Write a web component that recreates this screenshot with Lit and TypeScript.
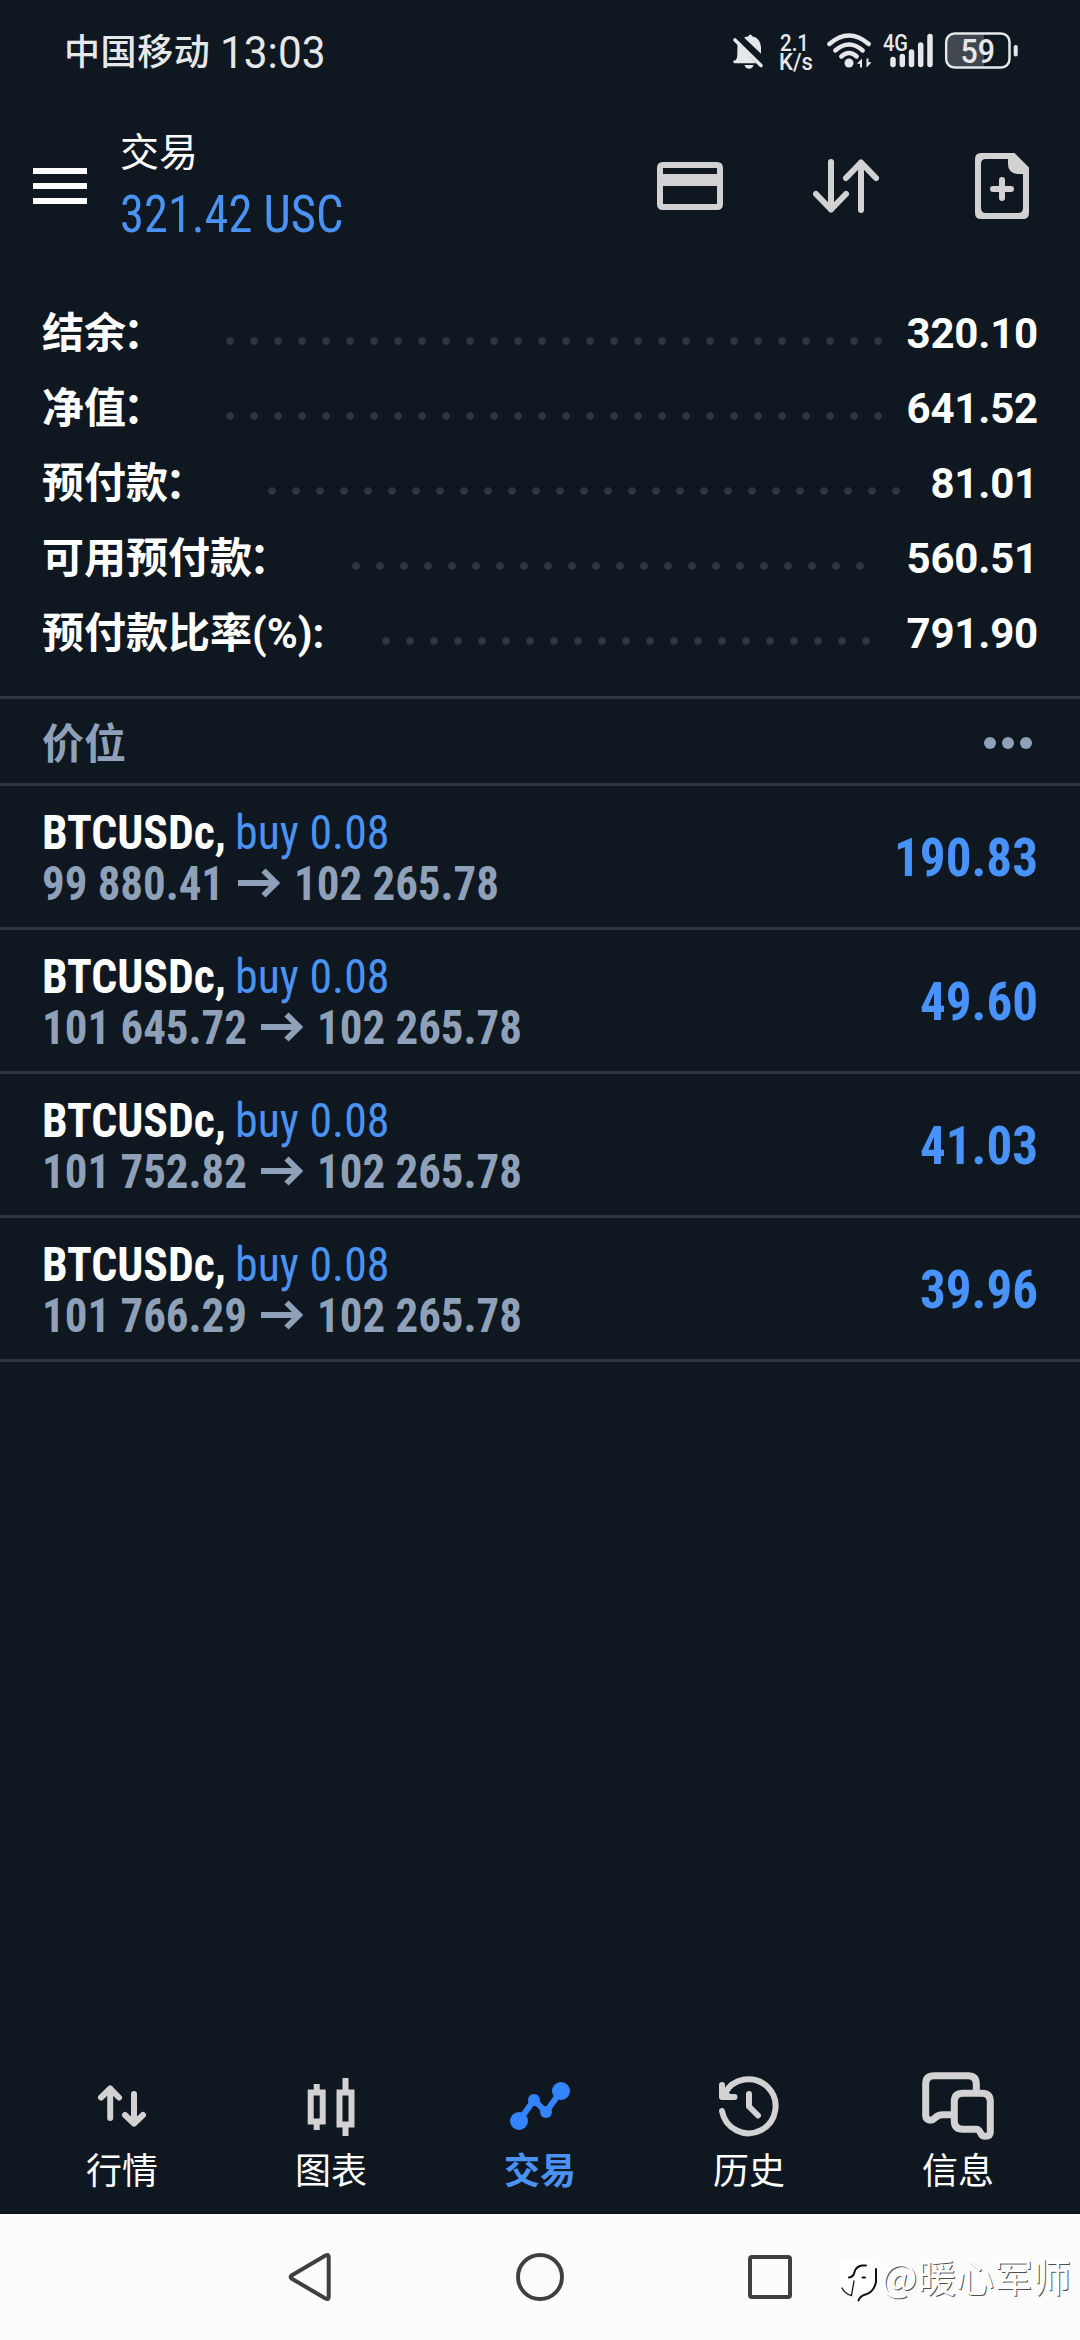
import { LitElement, html, css, svg } from "lit";
import { customElement, property } from "lit/decorators.js";

interface SummaryLine {
  label: string;
  colon: string;
  value: string;
  dots: number;
}

interface Position {
  open: string;
  openWidth: number;
  current: string;
  profit: string;
  profitWidth: number;
}

const SUMMARY: SummaryLine[] = [
  { label: "结余", colon: "：", value: "320.10", dots: 28 },
  { label: "净值", colon: "：", value: "641.52", dots: 28 },
  { label: "预付款", colon: "：", value: "81.01", dots: 27 },
  { label: "可用预付款", colon: "：", value: "560.51", dots: 22 },
  { label: "预付款比率(%):", colon: "", value: "791.90", dots: 21 },
];

const POSITIONS: Position[] = [
  { open: "99 880.41", openWidth: 182, current: "102 265.78", profit: "190.83", profitWidth: 144 },
  { open: "101 645.72", openWidth: 205, current: "102 265.78", profit: "49.60", profitWidth: 118 },
  { open: "101 752.82", openWidth: 205, current: "102 265.78", profit: "41.03", profitWidth: 118 },
  { open: "101 766.29", openWidth: 205, current: "102 265.78", profit: "39.96", profitWidth: 118 },
];

/** Single line of condensed text, squeezed to an exact advance width. */
@customElement("condensed-text")
class CondensedText extends LitElement {
  @property() text = "";
  @property({ type: Number }) width = 0;
  @property({ type: Number }) height = 51;
  @property({ type: Number }) baseline = 40;

  static styles = css`
    :host {
      display: block;
      flex: none;
      font-family: "Roboto Condensed", Roboto, sans-serif;
      font-stretch: 75%;
    }
    svg {
      display: block;
      overflow: visible;
    }
    text {
      fill: currentColor;
    }
  `;

  render() {
    return html`<svg width=${this.width} height=${this.height}>
      ${svg`<text x="0" y=${this.baseline} textLength=${this.width} lengthAdjust="spacingAndGlyphs">${this.text}</text>`}
    </svg>`;
  }
}

@customElement("status-bar")
class StatusBar extends LitElement {
  static styles = css`
    :host {
      display: flex;
      align-items: center;
      height: 105px;
      padding-left: 64px;
      padding-right: 62px;
      color: #e6e7e8;
    }
    .carrier {
      font-size: 36px;
      line-height: 60px;
      font-weight: 500;
      letter-spacing: 0.600px;
    }
    .time {
      margin-left: 9.500px;
      font-family: Roboto, sans-serif;
      font-stretch: 100%;
      font-size: 45px;
      font-weight: 450;
      flex: 1;
    }
    svg {
      display: block;
      flex: none;
      overflow: visible;
      position: relative;
      top: -1.5px;
    }
    .speed { margin-left: 17px; }
    .wifi { margin-left: 15px; }
    .signal { margin-left: 12px; }
    .battery { margin-left: 12px; }
    text {
      fill: #e6e7e8;
      font-size: 23px;
      font-weight: 500;
    }
    .level {
      font-size: 33px;
    }
  `;

  render() {
    return html`
      <div class="carrier">中国移动</div>
      <condensed-text class="time" .text=${"13:03"} .width=${105.5} .height=${60} .baseline=${44.5}></condensed-text>
      <svg class="bell" width="30" height="40" viewBox="733 31 30 40">
        <path fill="#e6e7e8" d="M744 37.5q2.500-1 4.500-1.300q.4-1.600 1.800-1.600t1.800 1.600q8.300 1.800 8.900 11v6.500z" />
        <path fill="#e6e7e8" d="M737.500 43L756 63.300H735q-1.800 0-1.800-1.500t1.800-1.500h.6q1.700-2 1.700-5z" />
        <path fill="#e6e7e8" d="M744.500 65h9q-.8 3.700-4.500 3.700t-4.500-3.700z" />
        <path stroke="#e6e7e8" stroke-width="3.600" stroke-linecap="round" d="M735 40L761 65.500" />
      </svg>
      <svg class="speed" width="32" height="40" viewBox="780 31 32 40">
        <text x="780" y="50.500" textLength="29" lengthAdjust="spacingAndGlyphs">2.1</text>
        <text x="779" y="69.500" textLength="34" lengthAdjust="spacingAndGlyphs">K/s</text>
      </svg>
      <svg class="wifi" width="44" height="40" viewBox="827 31 44 40">
        <g fill="none" stroke="#e6e7e8" stroke-width="4.400" stroke-linecap="round">
          <path d="M829.300 44Q849 27 868.700 44" />
          <path d="M835.300 50.500Q849 38.500 862.700 50.500" />
          <path d="M841.300 56.500Q849 49.500 856.700 56.500" />
        </g>
        <circle cx="849" cy="63" r="4.500" fill="#e6e7e8" />
        <path fill="#e6e7e8" d="M857 63.500l5-5v9h-2v-3.500zM871.500 62.500l-5 5v-9h2v3.500z" />
      </svg>
      <svg class="signal" width="50" height="40" viewBox="883 31 50 40">
        <text x="883" y="51" textLength="25" lengthAdjust="spacingAndGlyphs">4G</text>
        <g stroke="#e6e7e8" stroke-width="5.500" stroke-linecap="round">
          <path d="M893 59.500V64.500M902.300 56.500V64.500M911.500 52V64.500M920.700 45V64.500M930 36.500V64.500" />
        </g>
      </svg>
      <svg class="battery" width="73" height="40" viewBox="945 31 73 40">
        <path fill="#41474e" d="M984 34.500V66.500H955q-7.500 0-7.500-7.500V42q0-7.500 7.500-7.500z" />
        <rect x="946.200" y="33.500" width="63.300" height="34" rx="8.500" fill="none" stroke="#e6e7e8" stroke-width="2.500" />
        <rect x="1013.700" y="45" width="4" height="11.500" rx="1.800" fill="#e6e7e8" />
        <text class="level" x="960.500" y="62.500" textLength="34.500" lengthAdjust="spacingAndGlyphs">59</text>
      </svg>
    `;
  }
}

@customElement("app-header")
class AppHeader extends LitElement {
  static styles = css`
    :host {
      display: flex;
      align-items: center;
      height: 162px;
      padding: 0 51px 0 33px;
    }
    .titles {
      flex: 1;
      margin-left: 33px;
      padding-top: 2px;
    }
    .title {
      font-size: 39px;
      line-height: 47px;
      color: #fff;
    }
    .equity {
      margin-top: 8px;
      font-size: 51px;
      color: #4a93f5;
    }
    svg {
      display: block;
      flex: none;
    }
    .swap { margin-left: 90px; }
    .doc { margin-left: 96px; }
  `;

  render() {
    return html`
      <svg width="54" height="36" viewBox="0 0 54 36">
        <path fill="#fff" d="M0 0h54v6H0zM0 15h54v6H0zM0 30h54v6H0z" />
      </svg>
      <div class="titles">
        <div class="title">交易</div>
        <condensed-text class="equity" .text=${"321.42 USC"} .width=${223.5} .height=${60} .baseline=${47}></condensed-text>
      </div>
      <svg width="66" height="48" viewBox="0 0 66 48">
        <path fill="#d2d2d2" fill-rule="evenodd" d="M6 0h54q6 0 6 6v36q0 6-6 6H6q-6 0-6-6V6q0-6 6-6zM6 6v6h54V6zM6 24v18h54V24z" />
      </svg>
      <svg class="swap" width="66" height="54" viewBox="0 0 66 54">
        <path fill="none" stroke="#d2d2d2" stroke-width="6" stroke-linecap="round" stroke-linejoin="round"
          d="M18 3V50.500M3 35L18 50.500L33 35M48 51V3.500M33 19L48 3.500L63 19" />
      </svg>
      <svg class="doc" width="54" height="66" viewBox="0 0 54 66">
        <path fill="#d2d2d2" fill-rule="evenodd"
          d="M6 0H39.500L54 14.500V60q0 6-6 6H6q-6 0-6-6V6q0-6 6-6zM11 6q-5 0-5 5v44q0 5 5 5h32q5 0 5-5V21h-6q-9-1.500-9-10V6z" />
        <path stroke="#d2d2d2" stroke-width="6" stroke-linecap="round" d="M18 36H36M27 27V45" />
      </svg>
    `;
  }
}

@customElement("account-summary")
class AccountSummary extends LitElement {
  static styles = css`
    :host {
      display: block;
      padding: 29px 42px 25px;
    }
    .line {
      display: flex;
      align-items: center;
      height: 75px;
      font-size: 42px;
      line-height: 75px;
      font-weight: 700;
      color: #fff;
    }
    .colon {
      margin: 0 3px 0 -3px;
    }
    .dots {
      height: 24px;
      margin: 15px auto 0 50px;
      background: radial-gradient(circle at 12px 12px, #2c3645 3.400px, transparent 4.200px) 0 0 / 24px 24px repeat-x;
    }
    .value {
      letter-spacing: -0.200px;
    }
  `;

  render() {
    return SUMMARY.map(
      (line) => html`<div class="line">
        <span>${line.label}</span>
        <span class="colon">${line.colon}</span>
        <span class="dots" style="width:${line.dots * 24}px"></span>
        <span class="value">${line.value}</span>
      </div>`
    );
  }
}

@customElement("position-list")
class PositionList extends LitElement {
  static styles = css`
    :host {
      display: block;
    }
    .head {
      display: flex;
      align-items: center;
      justify-content: space-between;
      height: 84px;
      padding: 0 48px 0 42px;
      border-top: 3px solid #2c3645;
      border-bottom: 3px solid #2c3645;
      color: #8fa1b8;
      font-size: 42px;
      font-weight: 700;
    }
    .head span {
      line-height: 76px;
      padding-top: 8px;
    }
    .head svg {
      margin-top: 4px;
    }
    .row {
      display: flex;
      align-items: center;
      justify-content: space-between;
      height: 141px;
      padding: 0 42px;
      border-bottom: 3px solid #2c3645;
    }
    .info {
      padding-top: 7px;
      font-size: 48px;
    }
    .pair {
      display: flex;
    }
    .symbol {
      color: #fff;
      font-weight: 700;
    }
    .side {
      margin-left: 8.500px;
      color: #4a93f5;
    }
    .prices {
      color: #8fa1b8;
      font-weight: 700;
    }
    .arrow {
      display: block;
      flex: none;
      margin: 8px 14px 0 14px;
    }
    .profit {
      color: #4793fb;
      font-size: 54px;
      font-weight: 700;
    }
  `;

  render() {
    return html`
      <div class="head">
        <span>价位</span>
        <svg width="48" height="12" viewBox="0 0 48 12">
          <circle cx="6" cy="6" r="6" fill="#8fa1b8" />
          <circle cx="24" cy="6" r="6" fill="#8fa1b8" />
          <circle cx="42" cy="6" r="6" fill="#8fa1b8" />
        </svg>
      </div>
      ${POSITIONS.map(
        (p) => html`<div class="row">
          <div class="info">
            <div class="pair">
              <condensed-text class="symbol" .text=${"BTCUSDc,"} .width=${184}></condensed-text>
              <condensed-text class="side" .text=${"buy 0.08"} .width=${154.5}></condensed-text>
            </div>
            <div class="pair prices">
              <condensed-text .text=${p.open} .width=${p.openWidth}></condensed-text>
              <svg class="arrow" width="42" height="30" viewBox="0 0 42 30">
                <path fill="none" stroke="#8fa1b8" stroke-width="6" d="M0 15H38M25.500 2.500L38 15L25.500 27.500" />
              </svg>
              <condensed-text .text=${p.current} .width=${205}></condensed-text>
            </div>
          </div>
          <condensed-text class="profit" .text=${p.profit} .width=${p.profitWidth} .height=${60} .baseline=${48.5}></condensed-text>
        </div>`
      )}
    `;
  }
}

const TABS = [
  {
    label: "行情",
    active: false,
    viewBox: "86 2070 72 72",
    icon: svg`<path fill="none" stroke="#d2d2d2" stroke-width="6" stroke-linecap="round" stroke-linejoin="round"
      d="M110.200 2118V2088.500M101 2097.500L110.200 2088.500L119 2097.500M134 2094V2123.500M125 2115L134 2123.500L143 2115" />`,
  },
  {
    label: "图表",
    active: false,
    viewBox: "295 2070 72 72",
    icon: svg`<path fill="#d2d2d2" fill-rule="evenodd"
      d="M313.700 2084h6v5.500h6v35h-6v5.500h-6v-5.500h-6v-35h6zM313.700 2095.500v23h6v-23z
         M342.500 2078h6v11.500h6v38h-6v8.500h-6v-8.500h-6v-38h6zM342.500 2095.500v26h6v-26z" />`,
  },
  {
    label: "交易",
    active: true,
    viewBox: "504 2070 72 72",
    icon: svg`<path fill="none" stroke="#3384ff" stroke-width="6" d="M519 2121L534 2100L546 2112L561 2091" />
      <circle cx="519" cy="2121" r="9" fill="#3384ff" /><circle cx="534" cy="2100" r="6" fill="#3384ff" />
      <circle cx="546" cy="2112" r="6" fill="#3384ff" /><circle cx="561" cy="2091" r="9" fill="#3384ff" />`,
  },
  {
    label: "历史",
    active: false,
    viewBox: "713 2070 72 72",
    icon: svg`<path fill="none" stroke="#d2d2d2" stroke-width="6" stroke-linecap="round" stroke-linejoin="round"
      d="M722 2111A27 27 0 1 0 724.500 2094M722 2085V2097H734.500M749 2094V2106.500L758 2115.500" />
      <path fill="#d2d2d2" d="M722 2086L728 2092L734 2097V2100H722z" />`,
  },
  {
    label: "信息",
    active: false,
    viewBox: "922 2070 72 72",
    icon: svg`<path fill="none" stroke="#d2d2d2" stroke-width="7" stroke-linejoin="round"
      d="M976.300 2091V2084q0-8.300-8.300-8.300H934q-8.300 0-8.300 8.300V2115.500q0 4.500 5 4.700q2 0 4.500-2.500q3-3 7.500-3H954" />
      <path fill="none" stroke="#d2d2d2" stroke-width="7" stroke-linejoin="round"
      d="M963 2093.300H982q8.300 0 8.300 8.300V2132q0 4.300-5 4.300q-3.300 0-4.800-3.500q-1.500-3.500-4.500-3.500H963q-8.700 0-8.700-8.300V2101.600q0-8.300 8.700-8.300z" />`,
  },
];

@customElement("tab-bar")
class TabBar extends LitElement {
  static styles = css`
    :host {
      display: flex;
      padding: 0 17.500px 17px;
      border-bottom: 1px solid #080d14;
    }
    .tab {
      flex: 1;
      display: flex;
      flex-direction: column;
      align-items: center;
      gap: 6px;
      color: #fff;
      font-size: 36px;
      line-height: 48px;
    }
    .tab.active {
      color: #4a93f5;
      font-weight: 700;
    }
    svg {
      display: block;
    }
  `;

  render() {
    return TABS.map(
      (t) => html`<div class=${t.active ? "tab active" : "tab"}>
        <svg width="72" height="72" viewBox=${t.viewBox}>${t.icon}</svg>
        <span>${t.label}</span>
      </div>`
    );
  }
}

@customElement("system-bar")
class SystemBar extends LitElement {
  static styles = css`
    :host {
      display: flex;
      align-items: center;
      justify-content: center;
      gap: 169.500px;
      height: 126px;
      background: #fcfcfc;
      position: relative;
    }
    .mark {
      position: absolute;
      right: 9px;
      top: 34px;
      display: flex;
      align-items: center;
      height: 54px;
    }
    .mark span {
      margin-left: 3px;
      font-size: 38.400px;
      line-height: 54px;
      font-family: "Noto Sans CJK SC", sans-serif;
      font-weight: 400;
      color: #fff;
      text-shadow: 1px 1px 0 rgba(0, 0, 0, 0.7);
    }
    .mark svg {
      position: relative;
      top: 6px;
    }
    svg {
      display: block;
      flex: none;
    }
  `;

  render() {
    return html`
      <svg width="60" height="60" viewBox="280 2247 60 60">
        <path fill="none" stroke="#3f3f3f" stroke-width="4" stroke-linejoin="round"
          d="M290.500 2275.500L324.500 2255.500Q327.700 2254 327.700 2257V2297Q327.700 2300 324.500 2298.500L290.500 2278.500Q289 2277 290.500 2275.500z" />
      </svg>
      <svg width="60" height="60" viewBox="510 2247 60 60">
        <circle cx="540" cy="2277" r="22" fill="none" stroke="#3f3f3f" stroke-width="4" />
      </svg>
      <svg width="60" height="60" viewBox="739 2247 60 60">
        <rect x="749" y="2257" width="40" height="40" rx="2" fill="none" stroke="#3f3f3f" stroke-width="4" />
      </svg>
      <div class="mark">
        <svg width="38" height="46" viewBox="839 2260 38 46">
          <path fill="#fff" d="M848 2261H867Q876 2261 876 2270V2284Q876 2294 866 2296L858 2303L850 2297Q839 2294 839 2284V2270Q839 2261 848 2261z" />
          <g fill="none" stroke="#111" stroke-linecap="round">
            <path stroke-width="2" d="M865 2267.500H861Q855 2268.500 853.500 2274Q852.500 2279 848 2279.500" />
            <path stroke-width="2" d="M861.500 2279.500H864" />
            <path stroke-width="1.300" d="M853 2283L850.500 2297.500Q844 2296 841 2290" />
            <path stroke-width="2" d="M875 2271V2284Q873 2294 864.500 2296.500Q859 2298 857.500 2302.500" />
          </g>
        </svg>
        <span>@暖心军师</span>
      </div>
    `;
  }
}

@customElement("app-root")
class AppRoot extends LitElement {
  static styles = css`
    :host {
      display: flex;
      flex-direction: column;
      width: 1080px;
      height: 2340px;
      overflow: hidden;
      background: #0f1720;
      font-family: Roboto, "Noto Sans CJK SC", sans-serif;
    }
    .space {
      flex: 1;
    }
  `;

  render() {
    return html`
      <status-bar></status-bar>
      <app-header></app-header>
      <account-summary></account-summary>
      <position-list></position-list>
      <div class="space"></div>
      <tab-bar></tab-bar>
      <system-bar></system-bar>
    `;
  }
}
